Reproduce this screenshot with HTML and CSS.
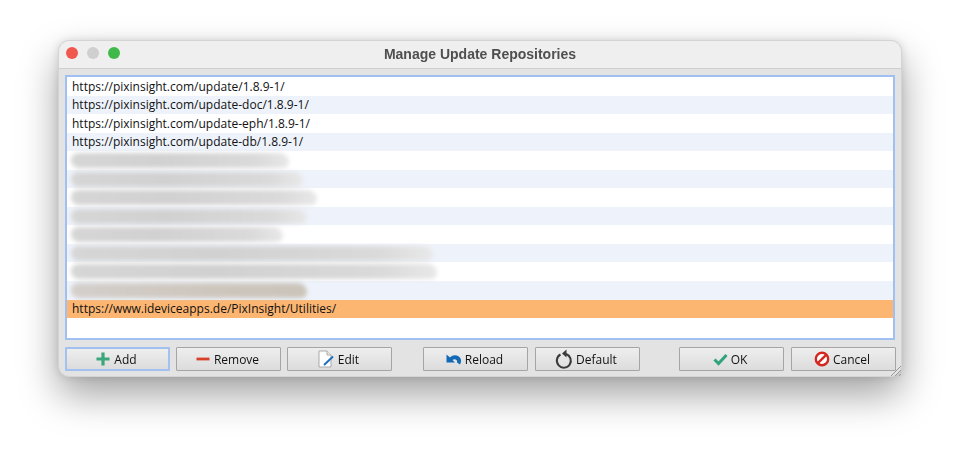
FILE: index.html
```html
<!DOCTYPE html>
<html lang="en">
<head>
<meta charset="utf-8">
<title>Manage Update Repositories</title>
<link rel="stylesheet" href="styles.css">
</head>
<body>
<div class="window">
  <header class="titlebar">
    <div class="lights"><span class="light red"></span><span class="light grey"></span><span class="light green"></span></div>
    <h1 class="title">Manage Update Repositories</h1>
  </header>
  <main class="content">
    <div class="list">
      <div class="row">https://pixinsight.com/update/1.8.9-1/</div>
      <div class="row alt">https://pixinsight.com/update-doc/1.8.9-1/</div>
      <div class="row">https://pixinsight.com/update-eph/1.8.9-1/</div>
      <div class="row alt">https://pixinsight.com/update-db/1.8.9-1/</div>
      <div class="row"><span class="smear w1"></span></div>
      <div class="row alt"><span class="smear w2"></span></div>
      <div class="row"><span class="smear w3"></span></div>
      <div class="row alt"><span class="smear w4"></span></div>
      <div class="row"><span class="smear w5"></span></div>
      <div class="row alt"><span class="smear w6"></span></div>
      <div class="row"><span class="smear w7"></span></div>
      <div class="row alt"><span class="smear w8 warm"></span></div>
      <div class="row selected">https://www.ideviceapps.de/PixInsight/Utilities/</div>
    </div>
    <div class="buttons">
      <div class="group">
        <button class="btn focus"><svg width="16" height="16" viewBox="0 0 16 16"><path d="M8 1.500v13M1.500 8h13" stroke="#3aa67c" stroke-width="3.200" fill="none"/></svg>Add</button>
        <button class="btn"><svg width="16" height="16" viewBox="0 0 16 16"><path d="M1.500 8h13" stroke="#d8402a" stroke-width="2.800" fill="none"/></svg>Remove</button>
        <button class="btn"><svg width="18" height="18" viewBox="0 0 18 18"><path d="M2 1h8l4 4v12H2z" fill="#fff" stroke="#a9a9a9"/><path d="M10 1v4h4" fill="#eee" stroke="#a9a9a9"/><path d="M7 15L16 6.500" stroke="#1f6fc0" stroke-width="2" fill="none"/></svg>Edit</button>
      </div>
      <div class="group mid">
        <button class="btn"><svg width="17" height="15" viewBox="0 0 17 15"><path d="M5 5.500C8 2.500 13 2.500 15.500 6.500 16.500 8.500 16 10.500 15 12.500L12 10.500C13 8.500 10 6 7.500 8L10 10.500H1.500V2.500z" fill="#1269b5"/></svg>Reload</button>
        <button class="btn"><svg width="18" height="20" viewBox="0 0 18 20"><path d="M5.500 5.500A7 7 0 1 0 11 5" fill="none" stroke="#3a3a3a" stroke-width="2"/><path d="M11.500 0.500v8L7 4.500z" fill="#3a3a3a"/></svg>Default</button>
      </div>
      <div class="group end">
        <button class="btn"><svg width="15" height="13" viewBox="0 0 15 13"><path d="M1.500 6.500L5.500 10.500 13.500 2" fill="none" stroke="#2fa37c" stroke-width="3"/></svg>OK</button>
        <button class="btn"><svg width="16" height="16" viewBox="0 0 16 16"><circle cx="8" cy="8" r="6.200" fill="#fff" stroke="#d3281f" stroke-width="2.400"/><path d="M3.800 12.200L12.200 3.800" stroke="#d3281f" stroke-width="2.400"/></svg>Cancel</button>
      </div>
    </div>
  </main>
  <svg class="grip" width="12" height="12" viewBox="0 0 12 12"><path d="M1 11L11 1M5 11l6-6M9 11l2-2" stroke="#9a9a9a" fill="none"/></svg>
</div>
</body>
</html>
```
FILE: styles.css
```css
* { box-sizing: border-box; }
html, body { margin: 0; height: 454px; overflow: hidden; }
body { background: #fff; padding: 40px 58px 0; font-family: "Open Sans", "Noto Sans", sans-serif; }
.window {
  position: relative;
  width: 844px;
  height: 337px;
  border-radius: 11px;
  background: #e3e3e3;
  border: 1px solid #d4d4d4;
  box-shadow: 0 18px 38px rgba(0,0,0,.36), 0 0 8px rgba(0,0,0,.12);
  display: flex;
  flex-direction: column;
}
.titlebar {
  height: 28px;
  flex: none;
  display: flex;
  align-items: center;
  justify-content: center;
  position: relative;
  background: #efefef;
  border-bottom: 1px solid #cfcfcf;
  border-radius: 10px 10px 0 0;
  filter: blur(.3px);
}
.lights { position: absolute; left: 7px; top: 6px; display: flex; gap: 9px; }
.light { width: 12px; height: 12px; border-radius: 50%; }
.red { background: #f0574e; }
.grey { background: #cfcfcf; }
.green { background: #3fb94a; }
.title { margin: 0 0 2px; font: bold 14px "Liberation Sans", sans-serif; color: #4f4f4f; }
.content { flex: 1; padding: 6px 6px 5px; display: flex; flex-direction: column; gap: 7px; min-height: 0; filter: blur(.3px); }
.list {
  height: 265px;
  flex: none;
  background: #fff;
  border: 2px solid #a0c0f2;
  overflow: hidden;
}
.row {
  height: 18.550px;
  padding-left: 5px;
  display: flex;
  align-items: center;
  font-size: 12px;
  color: #111;
  white-space: nowrap;
}
.alt { background: #eef3fb; }
.selected { background: #fdb672; }
.smear {
  display: block;
  height: 15px;
  margin-left: -1px;
  border-radius: 7px 9px 6px 8px;
  background: linear-gradient(90deg, #d6d6d6, #d1d1d1 40%, #dadada 85%, #e8e8e8);
  filter: blur(2px);
}
.warm { background: linear-gradient(90deg, #d4cfcb, #cdc6bd 60%, #cbc4ba); }
.w1 { width: 218px; }
.w2 { width: 232px; }
.w3 { width: 246px; }
.w4 { width: 236px; }
.w5 { width: 212px; }
.w6 { width: 362px; }
.w7 { width: 366px; }
.w8 { width: 236px; }
.buttons { display: flex; height: 24px; flex: none; }
.group { display: flex; gap: 6px; }
.mid { margin-left: 31px; gap: 7px; }
.end { margin-left: 39px; gap: 7px; }
.btn {
  width: 105px;
  height: 24px;
  padding: 0 3px 0 0;
  display: flex;
  align-items: center;
  justify-content: center;
  gap: 3px;
  border: 1px solid #a5a5a5;
  border-radius: 1px;
  background: linear-gradient(#eeeeee, #dcdcdc);
  font: 12px "Open Sans", "Noto Sans", sans-serif;
  color: #111;
}
.focus { border: 2px solid #a3c1f0; }
.grip { position: absolute; right: -1px; bottom: -1px; }
```
